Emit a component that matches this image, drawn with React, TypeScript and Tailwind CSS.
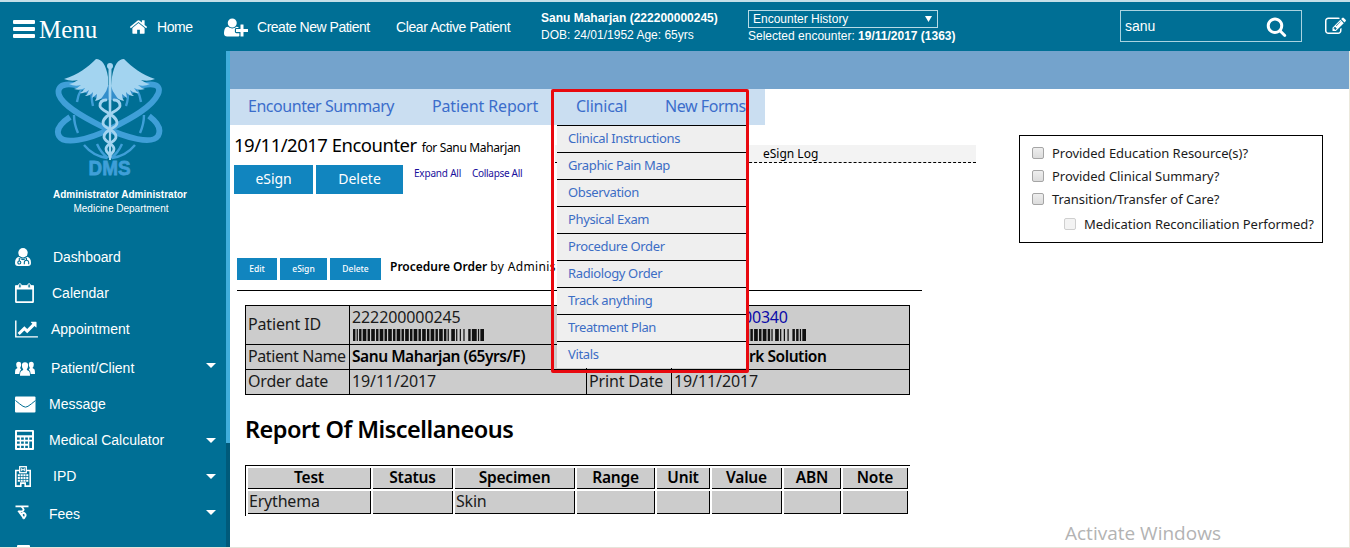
import React from "react";

const FA = {
  home: "M1472 992v480q0 26-19 45t-45 19h-384v-384h-256v384h-384q-26 0-45-19t-19-45v-480q0-1 .5-3t.5-3l575-474 575 474q1 2 1 6zm223-69l-62 74q-8 9-21 11h-3q-13 0-21-7l-692-577-692 577q-12 8-24 7-13-2-21-11l-62-74q-8-10-7-23.5t11-21.5l719-599q32-26 76-26t76 26l244 204v-195q0-14 9-23t23-9h192q14 0 23 9t9 23v408l219 182q10 8 11 21.5t-7 23.5z",
  userPlus:
    "M704 896q-159 0-271.5-112.5t-112.5-271.5 112.5-271.5 271.5-112.5 271.5 112.5 112.5 271.5-112.5 271.5-271.5 112.5zm960 128h352q13 0 22.5 9.5t9.5 22.5v192q0 13-9.5 22.5t-22.5 9.5h-352v352q0 13-9.5 22.5t-22.5 9.5h-192q-13 0-22.5-9.5t-9.5-22.5v-352h-352q-13 0-22.5-9.5t-9.5-22.5v-192q0-13 9.5-22.5t22.5-9.5h352v-352q0-13 9.5-22.5t22.5-9.5h192q13 0 22.5 9.5t9.5 22.5v352zm-736 224q0 52 38 90t90 38h256v238q-68 50-171 50h-874q-121 0-194-69t-73-190q0-53 3.5-103.5t14-109 26.5-108.5 43-97.5 62-81 85.5-53.5 111.5-20q19 0 39 17 79 61 154.5 91.5t164.5 30.5 164.5-30.5 154.5-91.5q20-17 39-17 132 0 217 96h-223q-52 0-90 38t-38 90v192z",
  search:
    "M1216 832q0-185-131.5-316.5t-316.5-131.5-316.5 131.5-131.5 316.5 131.5 316.5 316.5 131.5 316.5-131.5 131.5-316.5zm512 832q0 52-38 90t-90 38q-54 0-90-38l-343-342q-179 124-399 124-143 0-273.5-55.5t-225-150-150-225-55.5-273.5 55.5-273.5 150-225 225-150 273.5-55.5 273.5 55.5 225 150 150 225 55.5 273.5q0 220-124 399l343 343q37 37 37 90z",
  edit: "M888 1184l116-116-152-152-116 116v56h96v96h56zm440-720q-16-16-33 1l-350 350q-17 17-1 33t33-1l350-350q17-17 1-33zm80 594v190q0 119-84.5 203.5t-203.5 84.5h-832q-119 0-203.5-84.5t-84.5-203.5v-832q0-119 84.5-203.5t203.5-84.5h832q63 0 117 25 15 7 18 23 3 17-9 29l-49 49q-14 14-32 8-23-6-45-6h-832q-66 0-113 47t-47 113v832q0 66 47 113t113 47h832q66 0 113-47t47-113v-126q0-13 9-22l64-64q15-15 35-7t20 29zm-96-738l288 288-672 672h-288v-288zm444 132l-92 92-288-288 92-92q28-28 68-28t68 28l152 152q28 28 28 68t-28 68z",
  chart:
    "M2048 1536v128h-2048v-1536h128v1408h1920zm-128-1248v435q0 21-19.5 29.5t-35.5-7.5l-121-121-633 633q-10 10-23 10t-23-10l-233-233-416 416-192-192 585-585q10-10 23-10t23 10l233 233 464-464-121-121q-16-16-7.5-35.5t29.5-19.5h435q14 0 23 9t9 23z",
};

function DoctorIcon() {
  return (
    <svg width="16" height="18" viewBox="0 0 16 18">
      <circle cx="8" cy="4.800" r="4.700" fill="white" />
      <path d="M4 8.800Q0 9.500 0 15q0 3 3 3h10q3 0 3-3 0-5.500-4-6.200Q8 12.500 4 8.800z" fill="white" />
      <path
        d="M4.300 9.800v3.400M11.500 9.800v2.400M9.300 16.300v-1.800a2.200 2.200 0 0 1 4.400 0v1.800M5.500 10.600Q8 12.600 10.500 10.600"
        fill="none"
        stroke="#006f95"
        strokeWidth="1.100"
      />
      <circle cx="4.300" cy="14.500" r="1.500" fill="white" stroke="#006f95" strokeWidth="1.100" />
    </svg>
  );
}

function CalendarIcon() {
  return (
    <svg width="19" height="20" viewBox="0 0 19 20" fill="none" stroke="white">
      <rect x="0.900" y="3" width="17.200" height="16.200" rx="0.500" strokeWidth="1.700" />
      <path d="M0 2.500h19v4H0z" fill="white" stroke="none" />
      <rect x="3.700" y="0.700" width="2.400" height="4.400" rx="1.200" strokeWidth="1" fill="#006f95" />
      <rect x="12.900" y="0.700" width="2.400" height="4.400" rx="1.200" strokeWidth="1" fill="#006f95" />
    </svg>
  );
}

function GroupIcon() {
  return (
    <svg width="20" height="15" viewBox="0 0 20 15" fill="white">
      <path d="M1.200 3.500Q1.200.8 3.800.8 6 .8 6.200 3q.1 2-1 3.800.1 1.200 1 1.700-1.700 1-1.900 4.500H0q0-4 .6-4.700L2.500 7Q1.200 5.500 1.200 3.500zM18.800 3.500Q18.800.8 16.200.8 14 .8 13.800 3q-.1 2 1 3.800-.1 1.200-1 1.700 1.700 1 1.900 4.500H20q0-4-.6-4.700L17.500 7q1.300-1.500 1.300-3.500z" />
      <path d="M6.900 4.500Q6.900 1.200 10 1.200t3.100 3.300q0 2.200-1.400 3.800.2 1.100 2 1.700 1.300.6 1.300 4.800H5Q5 10.600 6.300 10q1.800-.6 2-1.700Q6.900 6.700 6.900 4.500z" />
    </svg>
  );
}

function MailIcon() {
  return (
    <svg width="21" height="17" viewBox="0 0 21 17">
      <rect x="0" y="0.500" width="20.500" height="16" rx="1" fill="white" />
      <path d="M0.500 4.500q4.500 3.800 7.500 5.800 2.500 1.700 5 0 3-2 7.500-5.800" fill="none" stroke="#006f95" strokeWidth="1" />
    </svg>
  );
}

function CalculatorIcon() {
  return (
    <svg width="20" height="20" viewBox="0 0 20 20">
      <rect x="0" y="0" width="19" height="20" rx="1" fill="white" />
      <path
        d="M2 1.700h15v3.600H2zM2 7.500h2.700v2.200H2zM6.100 7.500h2.700v2.200H6.100zM10.200 7.500h2.700v2.200h-2.700zM14.300 7.500H17v2.200h-2.700zM2 11.600h2.700v2.200H2zM6.100 11.600h2.700v2.200H6.100zM10.200 11.600h2.700v2.200h-2.700zM14.300 11.600H17v6.400h-2.700zM2 15.800h2.700V18H2zM6.100 15.800h2.700V18H6.100zM10.200 15.800h2.700V18h-2.700z"
        fill="#006f95"
      />
    </svg>
  );
}

function HospitalIcon() {
  return (
    <svg width="16" height="21" viewBox="0 0 16 21" fill="none" stroke="white">
      <path d="M4.500 4.500h-3.700v15.600h5v-3h4.400v3h5V4.500h-3.700" strokeWidth="1.600" />
      <rect x="4.700" y="0.700" width="6.600" height="6" strokeWidth="1.300" />
      <path d="M6.700 2.200v3M9.300 2.200v3M6.700 3.700h2.600" strokeWidth="1" />
      <path d="M2.800 9.200h10.500M2.800 12h10.500M2.800 14.800h10.500" strokeWidth="1.900" strokeDasharray="2.100 0.700" />
    </svg>
  );
}

function RupeeIcon() {
  return (
    <svg className="-mt-[3px]" width="14" height="16" viewBox="0 0 14 16" fill="none" stroke="white" strokeWidth="1.900">
      <path d="M0.500 1.400h13M6.500 1.600q4 3.600.4 4.800-3.100.4-3.700-.6M4 6.700l5.500 7.300M6.600 9.800q1-2.400 2.900-1.600 2 1.400.4 3.800-1 1.200-2.500.4" />
    </svg>
  );
}

const DIM = "#3f9fd8";
const PALE = "#a3d4f0";

function Logo() {
  return (
    <svg width="110" height="122" viewBox="0 0 110 122" fill="none">
      <g stroke={DIM} strokeWidth="2.400">
        <path d="M27 33q-3 5-4 12M38 35q-1 6 1 14M83 33q3 5 4 12M73 35q2 6-1 14M20 58q0 9 4 18M90 58q0 9-4 18M30 88q9 11 23 13M81 88q-9 11-23 13M43 87q4 9 11 14M68 87q-4 9-11 14" />
      </g>
      <path d="M27 32q28-8 57 0q-10 11-28 11T27 32z" fill="#338ecb" />
      <g stroke={DIM} strokeWidth="5.800">
        <path d="M31 31C12 24 2 28 5 38c4 11 24 22 44 32 24 11 49 18 55 9 4-7-1-14-9-20" />
        <path d="M80 31c20-7 28-3 24 6-6 13-26 24-48 35C34 83 10 88 5 79c-4-7 2-13 11-19" />
      </g>
      <g fill={PALE}>
        <path d="M54 20C52 8 48 2 42 2 34 10 24 18 10 22q7 3 14 1-4 3-9 4 6 3 12 1-3 3-7 4 6 2 11-1-2 4-5 5 5 1 9-3-1 4-4 6 5 0 8-4l-1 6 5-4q0 4-2 7 6-1 8-5 4-5 5-10z" />
        <path d="M58 20C60 8 64 2 70 2c8 8 18 16 31 20q-7 3-14 1 4 3 9 4-6 3-12 1 3 3 7 4-6 2-11-1 2 4 5 5-5 1-9-3 1 4 4 6-5 0-8-4l1 6-5-4q0 4 2 7-6-1-8-5-4-5-5-10z" />
        <circle cx="56" cy="9" r="3" />
        <path d="M54.500 11h3l-.5 92h-2z" />
      </g>
      <g stroke={PALE} strokeWidth="2.800" strokeLinecap="round">
        <path d="M52 43q-6 0-6 6c0 5 17 8 17 17 0 6-13 6-13 14 0 5 10 6 10 12 0 4-4 4-4 8" />
        <path d="M60 43q6 0 6 6c0 5-17 8-17 17 0 6 13 6 13 14 0 5-10 6-10 12 0 4 4 4 4 8" />
      </g>
      <text
        x="34.500"
        y="117.500"
        fill="#3f9fd8"
        stroke="#3f9fd8"
        strokeWidth="0.800"
        fontFamily="Liberation Sans"
        fontWeight="700"
        fontSize="21"
        textLength="42"
        lengthAdjust="spacingAndGlyphs"
      >
        DMS
      </text>
    </svg>
  );
}

type NavItem = {
  label: string;
  icon: React.ReactNode;
  cls: string;
  textCls: string;
  caret?: string;
};

const NAV: NavItem[] = [
  { label: "Dashboard", icon: <DoctorIcon />, cls: "h-9", textCls: "pl-[2px] tracking-[-0.1px]" },
  { label: "Calendar", icon: <CalendarIcon />, cls: "h-9", textCls: "pl-[1px]" },
  {
    label: "Appointment",
    icon: (
      <svg width="23" height="20" viewBox="0 0 2048 1792" fill="white">
        <path d={FA.chart} />
      </svg>
    ),
    cls: "h-9",
    textCls: "",
  },
  { label: "Patient/Client", icon: <GroupIcon />, cls: "h-[40px] pt-[2px]", textCls: "", caret: "-mt-[6px]" },
  { label: "Message", icon: <MailIcon />, cls: "h-[34px]", textCls: "-ml-[2px]" },
  { label: "Medical Calculator", icon: <CalculatorIcon />, cls: "h-[38px]", textCls: "-ml-[2px]", caret: "" },
  { label: "IPD", icon: <HospitalIcon />, cls: "h-[34px]", textCls: "pl-[2px]", caret: "" },
  { label: "Fees", icon: <RupeeIcon />, cls: "h-[42px]", textCls: "-ml-[2px]", caret: "-mt-[4px]" },
];

function Header() {
  return (
    <header className="flex h-[51px] w-full shrink-0 items-start border-t-2 border-[#c4dfe8] bg-[#006f95] text-white">
      <div className="flex w-[129px] pl-[13px]">
        <div className="flex w-[22px] flex-col gap-[3px] pt-[18px]">
          <div className="h-1 rounded-[1px] bg-white" />
          <div className="h-1 rounded-[1px] bg-white" />
          <div className="h-1 rounded-[1px] bg-white" />
        </div>
        <span className="pl-1 pt-[12px] font-['Liberation_Serif',serif] text-[25px] leading-8">Menu</span>
      </div>
      <div className="flex w-[95px] items-center pt-[15px]">
        <svg width="19" height="20" viewBox="0 0 1792 1792" fill="white">
          <path d={FA.home} />
        </svg>
        <span className="pl-[9px] text-[14px] leading-5 tracking-[-0.45px]">Home</span>
      </div>
      <div className="flex w-[172px] items-center pt-[15px]">
        <svg width="24" height="21" viewBox="0 0 2048 1792" fill="white">
          <path d={FA.userPlus} />
        </svg>
        <span className="whitespace-nowrap pb-px pl-[9px] text-[14px] leading-5 tracking-[-0.48px]">Create New Patient</span>
      </div>
      <span className="w-[145px] whitespace-nowrap pt-[15px] text-[14px] leading-5 tracking-[-0.4px]">Clear Active Patient</span>
      <div className="w-[207px] whitespace-nowrap pt-[8px] text-[12px] leading-[17px]">
        <div className="font-bold">Sanu Maharjan (222200000245)</div>
        <div>DOB: 24/01/1952 Age: 65yrs</div>
      </div>
      <div className="w-[372px] whitespace-nowrap pt-[8px] text-[12px]">
        <div className="flex h-[18px] w-[190px] items-center justify-between border border-[#b8dbe6] pl-1 pr-[5px] leading-4">
          <span>Encounter History</span>
          <svg width="7" height="6" viewBox="0 0 7 6" fill="white">
            <path d="M0 0h7L3.500 6z" />
          </svg>
        </div>
        <div className="leading-[17px]">
          Selected encounter: <b>19/11/2017 (1363)</b>
        </div>
      </div>
      <div className="mt-[8px] flex h-8 w-[182px] items-center justify-between border border-[#a9d3e0] pl-1 pr-[14px] text-[14px]">
        <span>sanu</span>
        <svg width="21" height="21" viewBox="0 0 1792 1792" fill="white">
          <path d={FA.search} />
        </svg>
      </div>
      <svg className="ml-[23px] mt-[14px]" width="21" height="21" viewBox="0 0 1792 1792" fill="white">
        <path d={FA.edit} />
      </svg>
    </header>
  );
}

function Sidebar() {
  return (
    <aside className="flex w-[230px] shrink-0 bg-[#006f95] text-white">
      <div className="flex w-[226px] flex-col overflow-hidden">
        <div className="h-[128px] shrink-0 pl-[54px] pt-[6px]">
          <Logo />
        </div>
        <div className="flex h-[60px] shrink-0 flex-col items-center pl-[14px] pt-[9px] text-[10px] leading-[14px]">
          <b className="tracking-[0.020px]">Administrator Administrator</b>
          <span className="pl-[2px]">Medicine Department</span>
        </div>
        {NAV.map((n) => (
          <div key={n.label} className={"flex shrink-0 items-center pl-[15px] pr-[10px] text-[14px] " + n.cls}>
            <div className="w-9">{n.icon}</div>
            <span className={"grow " + n.textCls}>{n.label}</span>
            {n.caret !== undefined && (
              <svg className={n.caret} width="10" height="5" viewBox="0 0 10 5" fill="white">
                <path d="M0 0h10L5 5z" />
              </svg>
            )}
          </div>
        ))}
        <div className="ml-[17px] mt-[10px] h-4 w-[13px] shrink-0 rounded-[1px] bg-white" />
      </div>
      <div className="w-1 bg-[#005a7a]">
        <div className="h-[392px] bg-[#40addb]" />
      </div>
    </aside>
  );
}

const MENU = [
  "Clinical Instructions",
  "Graphic Pain Map",
  "Observation",
  "Physical Exam",
  "Procedure Order",
  "Radiology Order",
  "Track anything",
  "Treatment Plan",
  "Vitals",
];

function ClinicalMenu() {
  return (
    <div className="absolute left-[321px] top-[38px] h-[284px] w-[198px] rounded-[2px] border-[3px] border-[#e8090f]">
      <ul className="mt-[33px] ml-[3px] bg-[#efefef]">
        {MENU.map((m) => (
          <li
            key={m}
            className="h-[27px] border-t border-black pl-[11px] text-[13px] leading-[24px] tracking-[-0.37px] text-[#3c6dc5]"
          >
            {m}
          </li>
        ))}
      </ul>
    </div>
  );
}

function Barcode({ bars, width }: { bars: string; width: number }) {
  const total = bars.split("").reduce((s, c) => s + Number(c), 0);
  const rects: React.ReactNode[] = [];
  let x = 0;
  bars.split("").forEach((c, i) => {
    const w = Number(c);
    if (i % 2 === 0) rects.push(<rect key={i} x={x} y="0" width={w} height="12" />);
    x += w;
  });
  return (
    <svg className="block" width={width} height="12" viewBox={`0 0 ${total} 12`} preserveAspectRatio="none" fill="#111">
      {rects}
    </svg>
  );
}

function OrderTable() {
  const cell = "border border-black px-[2px] py-0 whitespace-nowrap";
  return (
    <table className="mt-[14px] ml-[15px] w-[664px] table-fixed border-collapse bg-[#cccccc] text-[16px] leading-[22px] text-[#1b1b1b]">
      <colgroup>
        <col className="w-[104px]" />
        <col className="w-[237px]" />
        <col className="w-[85px]" />
        <col className="w-[238px]" />
      </colgroup>
      <tbody>
        <tr className="h-[39px] align-top">
          <td className={cell + " leading-[36px] tracking-[-0.15px]"}>Patient ID</td>
          <td className={cell}>
            <div className="h-[23px] leading-[22px] tracking-[-0.1px]">222200000245</div>
            <div className="h-[14px] pl-[1px]">
              <Barcode width={131} bars="211121312131213121312131213121312131213121312112311212132141113" />
            </div>
          </td>
          <td className={cell} />
          <td className={cell}>
            <div className="h-[23px] pl-[69px] leading-[22px] tracking-[-0.2px] text-[#0a0aa8]">00340</div>
            <div className="h-[14px] pl-[1px]">
              <Barcode width={131} bars="211121312131213121312131213121312131213121312112311212132121113" />
            </div>
          </td>
        </tr>
        <tr className="h-[25px] align-top">
          <td className={cell + " tracking-[-0.4px]"}>Patient Name</td>
          <td className={cell + " text-[15.500px] font-semibold tracking-[-0.45px] text-black"}>Sanu Maharjan (65yrs/F)</td>
          <td className={cell} />
          <td className={cell + " pl-[77px] text-[15.500px] font-semibold tracking-[-0.45px] text-black"}>rk Solution</td>
        </tr>
        <tr className="h-[25px] align-top">
          <td className={cell + " tracking-[-0.2px]"}>Order date</td>
          <td className={cell + " tracking-[-0.1px]"}>19/11/2017</td>
          <td className={cell + " tracking-[-0.15px]"}>Print Date</td>
          <td className={cell + " tracking-[-0.1px]"}>19/11/2017</td>
        </tr>
      </tbody>
    </table>
  );
}

const COLS = ["Test", "Status", "Specimen", "Range", "Unit", "Value", "ABN", "Note"];
const ROW = ["Erythema", "", "Skin", "", "", "", "", ""];

function ReportTable() {
  return (
    <div className="ml-[15px] grid w-[665px] shrink-0 grid-cols-[123px_80px_120px_78px_53px_70px_57px_65px] gap-x-[2px] gap-y-[2px] border-l border-t border-black pl-[2px] pt-[2px] pb-[2px] text-[16px]">
      {COLS.map((c) => (
        <div
          key={c}
          className="h-[21px] border-b border-r border-black bg-[#cccccc] text-center text-[15.500px] font-semibold leading-[18px] tracking-[-0.2px] text-black"
        >
          {c}
        </div>
      ))}
      {ROW.map((c, i) => (
        <div key={i} className="h-[23px] border-b border-r border-black bg-[#cccccc] pl-[1px] leading-[20px] tracking-[-0.2px] text-[#1b1b1b]">
          {c}
        </div>
      ))}
    </div>
  );
}

function Check({ label, sub }: { label: string; sub?: boolean }) {
  return (
    <label className={"flex items-center gap-2 whitespace-nowrap " + (sub ? "mt-[2px] h-[23px] pl-8" : "h-[23px]")}>
      <span
        className={
          "mb-px h-3 w-3 rounded-[2px] border " +
          (sub ? "border-[#cfcfcf] bg-[#f3f3f3]" : "border-[#a5a5a5] bg-linear-to-b from-[#eeeeee] to-[#dcdcdc]")
        }
      />
      {label}
    </label>
  );
}

const btn = "bg-[#1185bf] text-center text-white";

export default function App() {
  return (
    <div className="flex h-[548px] w-[1350px] flex-col overflow-hidden border-b border-[#e6e4da] bg-white font-['Liberation_Sans',Arial,sans-serif]">
      <Header />
      <div className="flex min-h-0 grow">
        <Sidebar />
        <main className="relative flex min-w-0 grow flex-col border-r border-[#ece9dc] font-['Noto_Sans','Open_Sans',sans-serif] text-black">
          <div className="h-[38px] shrink-0 bg-[#74a3cc]" />
          <nav className="flex h-9 w-[535px] shrink-0 whitespace-nowrap bg-[#cadef1] pl-[18px] text-[16px] leading-[34px] text-[#3b6dcb]">
            <span className="w-[184px] tracking-[-0.46px]">Encounter Summary</span>
            <span className="w-[144px] tracking-[-0.15px]">Patient Report</span>
            <span className="w-[89px] tracking-[-0.25px]">Clinical</span>
            <span className="tracking-[-0.45px]">New Forms</span>
          </nav>
          <div className="flex h-[133px] shrink-0">
            <div className="w-[325px] pl-1">
              <h1 className="flex h-10 items-baseline gap-[5px] whitespace-nowrap pt-[6px] text-[18.500px] leading-7 tracking-[-0.5px]">
                19/11/2017 Encounter <span className="text-[12px] tracking-[-0.35px]">for Sanu Maharjan</span>
              </h1>
              <div className="flex">
                <div className={btn + " h-[29px] w-[79px] text-[14px] leading-[28px] tracking-[-0.1px]"}>eSign</div>
                <div className={btn + " ml-[3px] h-[29px] w-[87px] text-[14px] leading-[28px]"}>Delete</div>
                <span className="ml-[11px] w-[58px] whitespace-nowrap text-[10px] leading-[17px] tracking-[-0.2px] text-[#1a0f9c]">Expand All</span>
                <span className="whitespace-nowrap text-[10px] leading-[17px] tracking-[-0.3px] text-[#1a0f9c]">Collapse All</span>
              </div>
            </div>
            <div className="mt-[20px] h-[18px] w-[421px] border-b border-dashed border-black bg-[#f3f3f3] pl-[208px] text-[12px] leading-[17px]">
              eSign Log
            </div>
            <div className="ml-[43px] mt-[10px] h-[108px] w-[304px] border border-black pl-3 pt-[6px] text-[13px] tracking-[-0.040px] text-[#1b1b1b]">
              <Check label="Provided Education Resource(s)?" />
              <Check label="Provided Clinical Summary?" />
              <Check label="Transition/Transfer of Care?" />
              <Check label="Medication Reconciliation Performed?" sub />
            </div>
          </div>
          <div className="ml-[7px] flex h-[33px] w-[685px] shrink-0 whitespace-nowrap border-b border-black text-[8.500px] font-medium leading-[21px]">
            <div className={btn + " h-[22px] w-10"}>Edit</div>
            <div className={btn + " ml-[3px] h-[22px] w-[47px]"}>eSign</div>
            <div className={btn + " ml-[3px] h-[22px] w-[51px]"}>Delete</div>
            <span className="pl-[9px] text-[12px] font-normal leading-[17px]">
              <b className="font-semibold">Procedure Order</b> <span className="tracking-[0.35px]">by Adminis</span>
            </span>
          </div>
          <OrderTable />
          <h2 className="flex h-[70px] shrink-0 items-center pl-[15px] text-[23.500px] font-semibold tracking-[-0.5px]">
            Report Of Miscellaneous
          </h2>
          <ReportTable />
          <div className="ml-[835px] mt-[3px] font-['Open_Sans',sans-serif] text-[19px] leading-7 text-[#b3b3b3]">Activate Windows</div>
          <ClinicalMenu />
        </main>
      </div>
    </div>
  );
}
